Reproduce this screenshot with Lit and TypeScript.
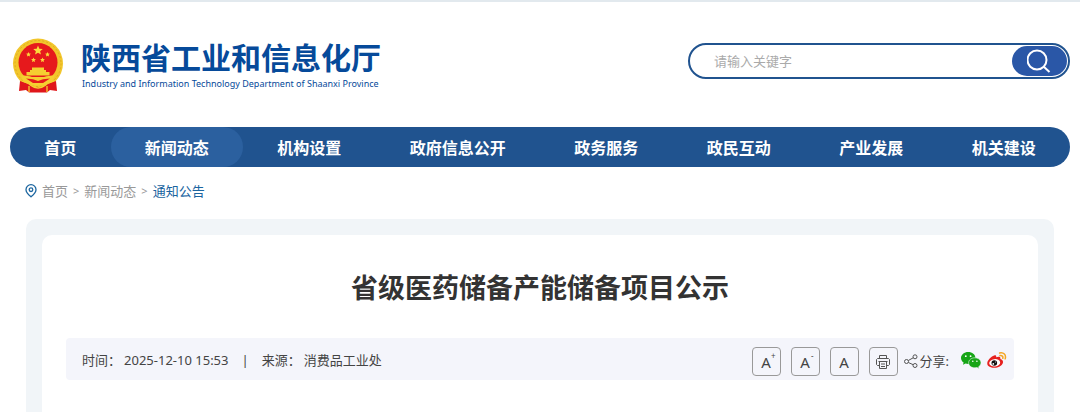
import { LitElement, html, css, svg } from "lit";
import { customElement } from "lit/decorators.js";
import { classMap } from "lit/directives/class-map.js";

const NAV = ["首页", "新闻动态", "机构设置", "政府信息公开", "政务服务", "政民互动", "产业发展", "机关建设"];

const star = (x: number, y: number, r: number) => {
  const pts: string[] = [];
  for (let i = 0; i < 10; i++) {
    const a = -Math.PI / 2 + (i * Math.PI) / 5;
    const k = i % 2 ? r * 0.45 : r;
    pts.push(`${(x + k * Math.cos(a)).toFixed(2)},${(y + k * Math.sin(a)).toFixed(2)}`);
  }
  return svg`<polygon points=${pts.join(" ")} fill="#fbdc3c"></polygon>`;
};

const emblem = html`<svg class="emblem" viewBox="0 0 52 56" aria-hidden="true">
  <ellipse cx="26" cy="25.500" rx="25" ry="25" fill="#f2c62b"></ellipse>
  <ellipse cx="26" cy="25.500" rx="23" ry="23" fill="none" stroke="#e0ab20" stroke-width="1" stroke-dasharray="2 2"></ellipse>
  <circle cx="26" cy="24.500" r="19.500" fill="#e6191c"></circle>
  ${star(26, 12.5, 5)} ${star(16.5, 16.5, 2.6)} ${star(35.5, 16.5, 2.6)} ${star(21.5, 22, 2.6)} ${star(30.5, 22, 2.6)}
  <path d="M20 29.500h12v2.500h2v2h3.500v3.500h-23V34H18v-2h2z" fill="#f5cf31"></path>
  <path d="M9 37.500c5 0 8 .5 11 1.500h12c3-1 6-1.500 11-1.500l-3 7-8 3H20l-8-3z" fill="#f5cf31"></path>
  <path d="M14 40.500l7 .8 5 1.700 5-1.700 7-.8-7 4.500H21z" fill="#e6191c"></path>
  <path d="M8 43l9 3 4 3h10l4-3 9-3 1 10-7-1-3 2.500H17L14 52l-7 1z" fill="#e0161b"></path>
  <path d="M10 43q6 2 9 4.500t7 2.500 7-2.500 9-4.500M17 48v6M35 48v6" fill="none" stroke="#f5cf31" stroke-width="1.300"></path>
</svg>`;

const wechat = html`<svg width="20" height="17" viewBox="0 0 20 17" aria-hidden="true">
  <path d="M7.200 0C3.200 0 0 2.700 0 6c0 1.900 1 3.500 2.600 4.600L2 12.800l2.600-1.300c.8.300 1.700.4 2.600.4 4 0 7.200-2.700 7.200-6S11.200 0 7.200 0z" fill="#16a516"></path>
  <path d="M13.800 5.800c-3.500 0-6.200 2.200-6.200 5s2.700 5 6.200 5c.8 0 1.500-.1 2.200-.3l2.200 1.200-.6-1.900c1.500-.9 2.400-2.300 2.400-4 0-2.800-2.700-5-6.200-5z" fill="#16a516" stroke="#f4f5fb" stroke-width=".6"></path>
  <g fill="#fff"><circle cx="4.800" cy="4.200" r=".9"></circle><circle cx="9.600" cy="4.200" r=".9"></circle><circle cx="11.800" cy="9.300" r=".8"></circle><circle cx="15.900" cy="9.300" r=".8"></circle></g>
</svg>`;

const weibo = html`<svg width="20" height="17" viewBox="0 0 20 17" aria-hidden="true">
  <path d="M7.200 3.400c1.200-.4 2.300 0 2 1.900 2.300-.9 4.700-.7 4.100 1.600 3.600 1.100 3.400 4.400.8 6.600-3.300 2.900-9.900 3-12.700.5C-2 11 2.800 4.800 7.200 3.400z" fill="#e6211f"></path>
  <ellipse cx="7.700" cy="10.800" rx="5.500" ry="3.700" transform="rotate(-7 7.700 10.800)" fill="#fff"></ellipse>
  <circle cx="7.300" cy="11" r="2.800" fill="#111"></circle>
  <circle cx="6.300" cy="11.900" r=".9" fill="#fff"></circle><circle cx="8.400" cy="10.100" r=".5" fill="#fff"></circle>
  <path d="M12.600 1c4-1 6.800 2 5.600 5.800M13 3.600c2-.4 3.300.8 2.800 2.700" fill="none" stroke="#f5a623" stroke-width="1.500" stroke-linecap="round"></path>
</svg>`;

@customElement("app-root")
export class AppRoot extends LitElement {
  static styles = css`
    :host {
      display: flex;
      flex-direction: column;
      box-sizing: border-box;
      min-height: 100vh;
      border-top: 2px solid #e2e9ee;
      background: #fff;
      color: #444;
      font: 13px/20px "Noto Sans", "Noto Sans CJK SC", sans-serif;
    }
    * { box-sizing: border-box; }
    a { color: inherit; text-decoration: none; }
    svg { display: block; flex: none; }
    button { padding: 0; font: inherit; cursor: pointer; }
    .top {
      display: flex;
      align-items: flex-start;
      justify-content: space-between;
      padding: 36px 10px 0 12px;
    }
    .brand { display: flex; align-items: flex-start; gap: 17px; color: #064a9a; }
    .emblem { width: 52px; height: 56px; }
    .name { margin: 0; font: 700 30px/36px "Noto Sans CJK SC", sans-serif; }
    .english { margin: 0; padding-left: 1px; font-size: 9px; }
    .search {
      display: flex;
      align-items: center;
      width: 382px;
      height: 36px;
      margin-top: 5px;
      padding-right: 1px;
      border: 2px solid #20538f;
      border-radius: 18px;
    }
    .search input {
      flex: 1;
      min-width: 0;
      padding: 0 0 0 24px;
      border: 0;
      outline: 0;
      background: none;
      font: inherit;
    }
    .search input::placeholder { color: #aaa; opacity: 1; }
    .search button {
      display: flex;
      align-items: center;
      justify-content: center;
      width: 55px;
      height: 30px;
      border: 0;
      border-radius: 15px;
      background: #2a57a7;
    }
    .nav {
      display: flex;
      height: 40px;
      margin: 33px 10px 0;
      border-radius: 20px;
      background: #20538f;
      color: #fff;
      font: 700 16px/40px "Noto Sans CJK SC", sans-serif;
    }
    .nav a { flex: 1 1 auto; border-radius: 20px; text-align: center; white-space: nowrap; }
    .nav .active { background: #2b609f; }
    .crumbs {
      display: flex;
      align-items: center;
      gap: 5px;
      padding: 14px 25px 18px;
      color: #999;
    }
    .crumbs span { font-size: 11px; }
    .crumbs .here { color: #1b659f; }
    .panel {
      display: flex;
      flex: 1;
      margin: 0 26px;
      padding: 16px 16px 0;
      border-radius: 10px 10px 0 0;
      background: #f1f5f8;
    }
    .article {
      flex: 1;
      min-width: 0;
      padding: 31px 24px;
      border-radius: 10px 10px 0 0;
      background: #fff;
    }
    .title {
      margin: 0 0 30px;
      color: #333;
      font: 700 27px/42px "Noto Sans CJK SC", sans-serif;
      text-align: center;
    }
    .meta {
      display: flex;
      align-items: center;
      justify-content: space-between;
      height: 42px;
      padding: 0 7px 0 16px;
      border-radius: 4px;
      background: #f4f5fb;
    }
    .facts, .tools, .share { display: flex; align-items: center; }
    .facts { gap: 13px; padding-top: 2px; }
    .facts .fact { display: flex; gap: 3px; }
    .tools { gap: 10px; padding-top: 5px; }
    .tools button {
      display: flex;
      align-items: center;
      justify-content: center;
      width: 29px;
      height: 29px;
      border: 1px solid #999;
      border-radius: 4px;
      background: none;
      color: #444;
      font-size: 15px;
    }
    .tools sup { align-self: flex-start; width: 5px; margin-right: -5px; font-size: 8px; line-height: 16px; }
    .share { gap: 2px; height: 24px; margin-left: -4px; padding-bottom: 2px; }
    .share .icons { display: flex; gap: 6px; margin-left: 10px; }
  `;

  render() {
    return html`
      <header class="top">
        <div class="brand">
          ${emblem}
          <div>
            <h1 class="name">陕西省工业和信息化厅</h1>
            <p class="english">Industry and Information Technology Department of Shaanxi Province</p>
          </div>
        </div>
        <form class="search" role="search" @submit=${(e: Event) => e.preventDefault()}>
          <input type="text" placeholder="请输入关键字" aria-label="请输入关键字" />
          <button aria-label="搜索">
            <svg width="26" height="26" viewBox="0 0 26 26" fill="none" stroke="#fff" stroke-width="2">
              <circle cx="10" cy="12" r="9.500"></circle>
              <path d="M16.500 18.500l6 5.500"></path>
            </svg>
          </button>
        </form>
      </header>
      <nav class="nav">
        ${NAV.map((t, i) => html`<a href="#" class=${classMap({ active: i === 1 })}>${t}</a>`)}
      </nav>
      <div class="crumbs">
        <svg width="12" height="14" viewBox="0 0 12 14" fill="none" stroke="#1b659f" stroke-width="1.300">
          <path d="M6 12.800C3 10.300 1 8 1 5.700a5 5 0 0 1 10 0c0 2.300-2 4.600-5 7.100z"></path>
          <circle cx="6" cy="5.700" r="1.800"></circle>
        </svg>
        <a href="#">首页</a><span>&gt;</span><a href="#">新闻动态</a><span>&gt;</span><a href="#" class="here">通知公告</a>
      </div>
      <main class="panel">
        <article class="article">
          <h2 class="title">省级医药储备产能储备项目公示</h2>
          <div class="meta">
            <div class="facts">
              <span class="fact"><span>时间：</span><time>2025-12-10 15:53</time></span>
              <span>|</span>
              <span class="fact"><span>来源：</span><span>消费品工业处</span></span>
            </div>
            <div class="tools">
              <button aria-label="放大字体">A<sup>+</sup></button>
              <button aria-label="缩小字体">A<sup>-</sup></button>
              <button aria-label="默认字体">A</button>
              <button aria-label="打印">
                <svg width="14" height="14" viewBox="0 0 14 14" fill="none" stroke="#555" stroke-width="1">
                  <path d="M3.500 3.500v-3h7v3M3.500 10.500h-2l-1-1v-5l1-1h11l1 1v5l-1 1h-2M2.500 6.500h9M3.500 6.500v7h7v-7M5 9h4M5 11.500h4"></path>
                </svg>
              </button>
              <div class="share">
                <svg width="14" height="14" viewBox="0 0 14 14" fill="none" stroke="#555" stroke-width="1">
                  <circle cx="2.500" cy="7.500" r="2"></circle>
                  <circle cx="11" cy="2.800" r="2"></circle>
                  <circle cx="11" cy="11.500" r="2"></circle>
                  <path d="M4.300 6.500L9.200 3.800M4.300 8.500l4.900 2.200"></path>
                </svg>
                <span>分享:</span>
                <span class="icons">
                  <a href="#" aria-label="微信">${wechat}</a>
                  <a href="#" aria-label="微博">${weibo}</a>
                </span>
              </div>
            </div>
          </div>
        </article>
      </main>
    `;
  }
}
